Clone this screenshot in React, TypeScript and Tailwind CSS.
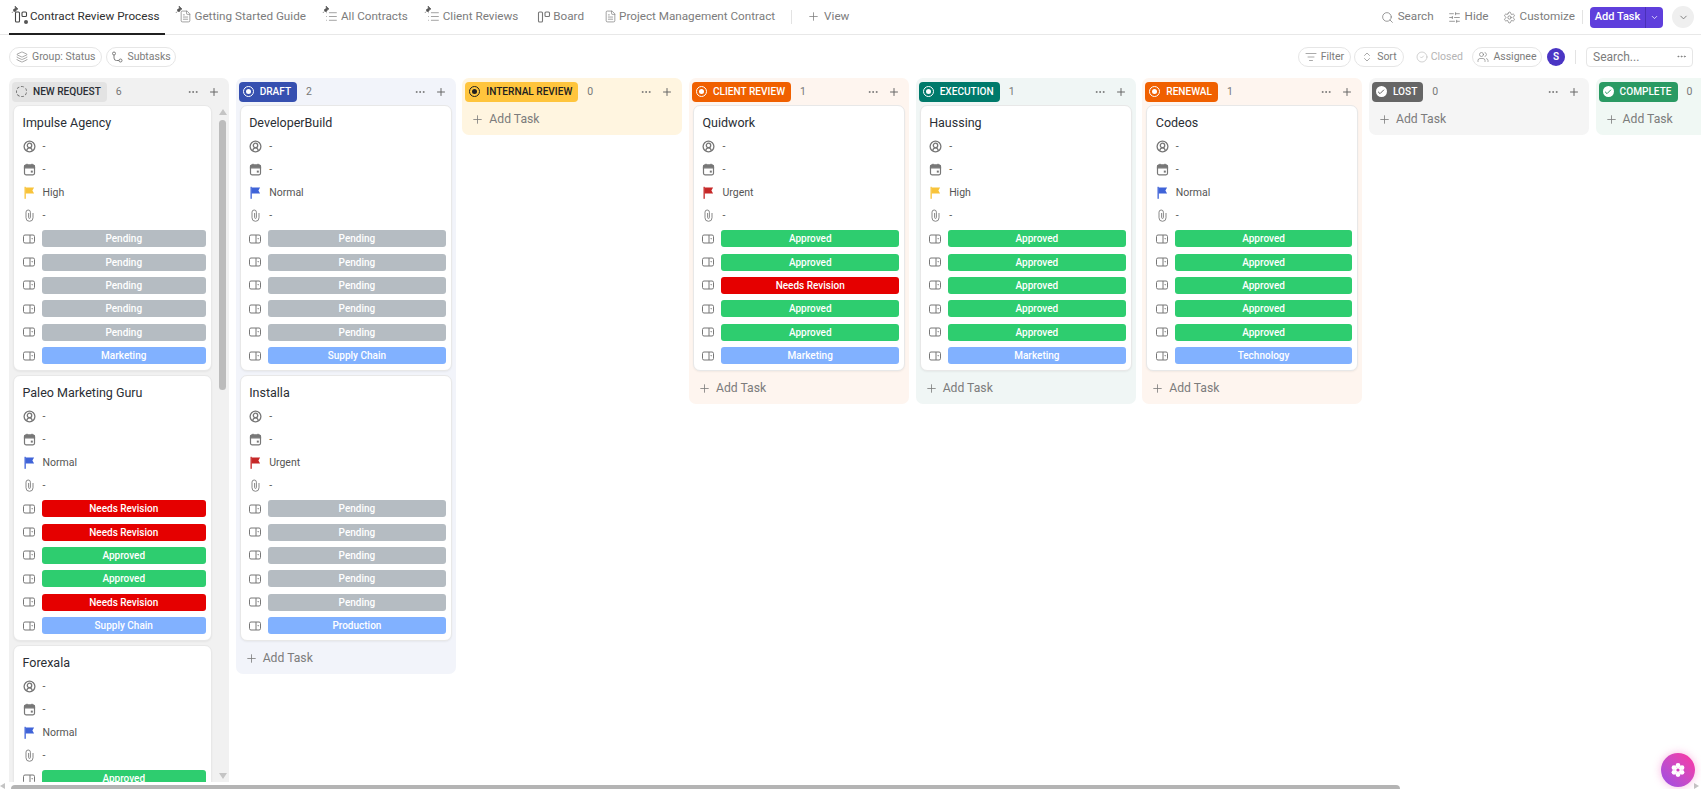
import React from 'react';
import { Search, SlidersHorizontal, Settings, ChevronDown, Plus, Ellipsis, Layers, ListFilter, ChevronsUpDown, CircleCheck, Users, FileText, List, Check } from 'lucide-react';

const font = 'font-["Roboto",sans-serif]';

const Pin = () => (
  <svg width="8" height="8" viewBox="0 0 8 8" className="absolute -left-[3px] -top-[4px] text-[#555]">
    <path d="M4 0l3 3-1.2.6L4 6 2 4l2.4-1.8z M2.6 5.2L.8 7" fill="currentColor" stroke="currentColor" strokeWidth="0.6" />
  </svg>
);

const BoardIcon = ({ className = 'text-[#777]' }: { className?: string }) => (
  <svg width="14" height="14" viewBox="0 0 14 14" fill="none" stroke="currentColor" strokeWidth="1.1" className={className}>
    <rect x="1.5" y="2" width="4" height="10" rx="1" />
    <rect x="8" y="2" width="4.5" height="4.5" rx="1" />
  </svg>
);

const Tab = ({ icon, label, pinned, active }: { icon: React.ReactNode; label: string; pinned?: boolean; active?: boolean }) => (
  <div className={`h-[35px] flex items-center gap-[2px] pl-[5px] pr-[6px] text-[11.7px] border-b-2 -mb-px ${active ? 'border-[#202020] text-[#303030]' : 'border-transparent text-[#7c7c7c]'}`}>
    <span className="relative flex w-[14px] justify-center">
      {pinned && <Pin />}
      {active && <span className="absolute right-0 bottom-0 w-[4px] h-[4px] rounded-full bg-[#555]" />}
      {icon}
    </span>
    <span>{label}</span>
  </div>
);

const Pill = ({ icon, label, px = 'px-[6px]' }: { icon: React.ReactNode; label: string; px?: string }) => (
  <div className={`h-5 flex items-center gap-1 rounded-full border border-[#e6e6e6] text-[10.5px] text-[#7c7c7c] ${px}`}>
    {icon}
    <span>{label}</span>
  </div>
);

const SubtaskIcon = () => (
  <svg width="12" height="12" viewBox="0 0 12 12" fill="none" stroke="currentColor" strokeWidth="1">
    <circle cx="3" cy="2.5" r="1.5" />
    <circle cx="9.5" cy="9.5" r="1.5" />
    <path d="M3 4v3a2.5 2.5 0 0 0 2.5 2.5H8" />
  </svg>
);

const FieldIcon = () => (
  <svg width="12" height="10" viewBox="0 0 12 10" fill="none" stroke="#777" strokeWidth="1" className="shrink-0">
    <rect x="0.5" y="1" width="11" height="8" rx="1.5" />
    <path d="M7 1v8" />
    <path d="M8.2 4.2h2l-1 1.4z" fill="#777" stroke="none" />
  </svg>
);

const PersonIcon = () => (
  <svg width="13" height="13" viewBox="0 0 13 13" fill="none" stroke="#777" strokeWidth="1.3">
    <circle cx="6.5" cy="6.5" r="5.4" />
    <circle cx="6.5" cy="5.4" r="2.2" />
    <path d="M3.6 10.8c.4-2 1.4-3 2.9-3s2.5 1 2.9 3" />
  </svg>
);

const CalIcon = () => (
  <svg width="13" height="13" viewBox="0 0 13 13" fill="none" stroke="#777" strokeWidth="1.2">
    <rect x="1.5" y="2.2" width="10" height="9.6" rx="1.5" />
    <path d="M1.5 3.5a1.3 1.3 0 0 1 1.3-1.3h7.4a1.3 1.3 0 0 1 1.3 1.3v1.3h-10z" fill="#777" />
    <path d="M4 .8v2M9 .8v2" />
    <rect x="7.8" y="7.6" width="2" height="2" fill="#777" stroke="none" />
  </svg>
);

const FlagIcon = ({ color }: { color: string }) => (
  <svg width="13" height="13" viewBox="0 0 13 13" fill={color}>
    <rect x="1.5" y="0.8" width="1.3" height="12" />
    <path d="M2.5 1.5h8.6L9.4 4.4l1.7 3.1H2.5z" />
  </svg>
);

const ClipIcon = () => (
  <svg width="13" height="13" viewBox="0 0 13 13" fill="none" stroke="#888" strokeWidth="1">
    <path d="M10 4v4.8a3.5 3.5 0 0 1-7 0V3.2a2.2 2.2 0 0 1 4.4 0v5.3a.9.9 0 0 1-1.8 0V4" />
  </svg>
);

const Row = ({ icon, text }: { icon: React.ReactNode; text: string }) => (
  <div className="h-[23px] flex items-center">
    <span className="w-5 flex shrink-0">{icon}</span>
    <span className="text-[10.5px] text-[#555]">{text}</span>
  </div>
);

const badgeColors: Record<string, string> = {
  Pending: 'bg-[#b5bcc2]',
  Approved: 'bg-[#2ecd6f]',
  'Needs Revision': 'bg-[#e50000]',
  Marketing: 'bg-[#81b1ff]',
  'Supply Chain': 'bg-[#81b1ff]',
  Production: 'bg-[#81b1ff]',
  Technology: 'bg-[#81b1ff]',
};

const priorityColors: Record<string, string> = {
  High: '#f8c33a',
  Normal: '#3f63d8',
  Urgent: '#c62828',
};

type Task = { name: string; priority: string; badges: string[] };

const Card = ({ task }: { task: Task }) => (
  <div className="shrink-0 h-[266px] rounded-[7px] bg-white border border-[#e8e8e8] shadow-[0_1px_2px_rgba(0,0,0,0.05)] pl-[8.5px] pr-[5px] pt-[6px]">
    <div className="h-[22px] flex items-center text-[12.5px] text-[#2a2e34] mb-[1px]">{task.name}</div>
    <Row icon={<PersonIcon />} text="-" />
    <Row icon={<CalIcon />} text="-" />
    <Row icon={<FlagIcon color={priorityColors[task.priority]} />} text={task.priority} />
    <Row icon={<ClipIcon />} text="-" />
    {task.badges.map((b, i) => (
      <div key={i} className="h-[23.4px] flex items-center">
        <span className="w-[19px] flex shrink-0"><FieldIcon /></span>
        <div className={`flex-1 h-[17px] rounded-[3px] flex items-center justify-center text-[10px] font-medium text-white ${badgeColors[b]}`}>{b}</div>
      </div>
    ))}
  </div>
);

const StatusIcon = ({ type, color }: { type: string; color: string }) => {
  if (type === 'none') return <span className="w-[11px] h-[11px] rounded-full border border-dashed border-[#777] shrink-0" />;
  if (type === 'check')
    return (
      <span className="w-[11px] h-[11px] rounded-full bg-white flex items-center justify-center shrink-0">
        <Check size={8} strokeWidth={3} style={{ color }} />
      </span>
    );
  return (
    <span className={`w-[11px] h-[11px] rounded-full border-[1.5px] flex items-center justify-center shrink-0 ${type === 'dark' ? 'border-[#202020]' : 'border-white'}`}>
      <span className={`w-[5px] h-[5px] rounded-full ${type === 'dark' ? 'bg-[#202020]' : 'bg-white'}`} />
    </span>
  );
};

type Col = {
  name: string;
  count: number;
  tag: string;
  text: string;
  bg: string;
  icon: string;
  color: string;
  tasks: Task[];
  fixedH?: boolean;
};

const pending5 = ['Pending', 'Pending', 'Pending', 'Pending', 'Pending'];
const approved = (last: string, mid = 'Approved') => ['Approved', 'Approved', mid, 'Approved', 'Approved', last];

const columns: Col[] = [
  {
    name: 'NEW REQUEST', count: 6, tag: 'bg-[#e3e3e3]', text: 'text-[#2a2e34]', bg: 'bg-[#f1f1f1]', icon: 'none', color: '#777',
    fixedH: true,
    tasks: [
      { name: 'Impulse Agency', priority: 'High', badges: [...pending5, 'Marketing'] },
      { name: 'Paleo Marketing Guru', priority: 'Normal', badges: ['Needs Revision', 'Needs Revision', 'Approved', 'Approved', 'Needs Revision', 'Supply Chain'] },
      { name: 'Forexala', priority: 'Normal', badges: ['Approved', 'Approved', 'Approved', 'Approved', 'Approved', 'Marketing'] },
    ],
  },
  {
    name: 'DRAFT', count: 2, tag: 'bg-[#3650b0]', text: 'text-white', bg: 'bg-[#f2f4fa]', icon: 'ring', color: '#fff',
    tasks: [
      { name: 'DeveloperBuild', priority: 'Normal', badges: [...pending5, 'Supply Chain'] },
      { name: 'Installa', priority: 'Urgent', badges: [...pending5, 'Production'] },
    ],
  },
  { name: 'INTERNAL REVIEW', count: 0, tag: 'bg-[#ffc53d]', text: 'text-[#202020]', bg: 'bg-[#fff5e0]', icon: 'dark', color: '#202020', tasks: [] },
  {
    name: 'CLIENT REVIEW', count: 1, tag: 'bg-[#f06000]', text: 'text-white', bg: 'bg-[#fef5ef]', icon: 'ring', color: '#fff',
    tasks: [{ name: 'Quidwork', priority: 'Urgent', badges: approved('Marketing', 'Needs Revision') }],
  },
  {
    name: 'EXECUTION', count: 1, tag: 'bg-[#007a6b]', text: 'text-white', bg: 'bg-[#f0f6f5]', icon: 'ring', color: '#fff',
    tasks: [{ name: 'Haussing', priority: 'High', badges: approved('Marketing') }],
  },
  {
    name: 'RENEWAL', count: 1, tag: 'bg-[#f06000]', text: 'text-white', bg: 'bg-[#fef5ef]', icon: 'ring', color: '#fff',
    tasks: [{ name: 'Codeos', priority: 'Normal', badges: approved('Technology') }],
  },
  { name: 'LOST', count: 0, tag: 'bg-[#666666]', text: 'text-white', bg: 'bg-[#f5f5f5]', icon: 'check', color: '#666666', tasks: [] },
  { name: 'COMPLETE', count: 0, tag: 'bg-[#2a9a63]', text: 'text-white', bg: 'bg-[#f0f8f4]', icon: 'check', color: '#2a9a63', tasks: [] },
];

const Column = ({ col }: { col: Col }) => (
  <div className={`w-[220px] shrink-0 rounded-[7px] ${col.bg} ${col.fixedH ? 'h-[704px] rounded-b-none overflow-hidden' : 'self-start'}`}>
    <div className="h-[27px] flex items-center pl-[3px] pr-[9px]">
      <div className={`h-5 flex items-center gap-[6px] pl-1 pr-[6px] rounded-[4px] ${col.tag}`}>
        <StatusIcon type={col.icon} color={col.color} />
        <span className={`text-[10.1px] font-medium ${col.text}`}>{col.name}</span>
      </div>
      <span className="ml-[9px] text-[10.5px] text-[#777]">{col.count}</span>
      <Ellipsis size={12} className="ml-auto text-[#777]" />
      <Plus size={12} className="ml-[9px] text-[#666]" />
    </div>
    {col.fixedH ? (
      <div className="flex pl-1 pr-[3px] gap-[7px]">
        <div className="w-[199px] flex flex-col gap-[4px]">
          {col.tasks.map((t) => <Card key={t.name} task={t} />)}
        </div>
        <div className="w-[7px] flex flex-col items-center pt-1">
          <span className="w-0 h-0 border-x-4 border-x-transparent border-b-[6px] border-b-[#c4c4c4]" />
          <span className="w-[7px] h-[270px] mt-[5px] rounded-full bg-[#bcbcbc]" />
          <span className="w-0 h-0 mt-[383px] border-x-4 border-x-transparent border-t-[6px] border-t-[#c4c4c4]" />
        </div>
      </div>
    ) : (
      <div className={`px-1 flex flex-col gap-[4px] ${col.tasks.length ? 'mb-[3px]' : ''}`}>
        {col.tasks.map((t) => <Card key={t.name} task={t} />)}
      </div>
    )}
    {!col.fixedH && (
      <div className="h-[27px] mb-[3px] pt-[2px] flex items-center gap-[5px] pl-[9px] text-[12.2px] text-[#7c7c7c]">
        <Plus size={13} strokeWidth={1.5} />
        <span>Add Task</span>
      </div>
    )}
  </div>
);

export default function App() {
  return (
    <div className={`relative h-screen w-full overflow-hidden bg-white flex flex-col ${font}`}>
      <div className="h-[35px] shrink-0 flex items-center gap-2 border-b border-[#e8e8e8] pl-[9px] pr-[7px]">
        <Tab active pinned icon={<BoardIcon className="text-[#444]" />} label="Contract Review Process" />
        <Tab pinned icon={<FileText size={13} strokeWidth={1.3} />} label="Getting Started Guide" />
        <Tab pinned icon={<List size={13} strokeWidth={1.3} />} label="All Contracts" />
        <Tab pinned icon={<List size={13} strokeWidth={1.3} />} label="Client Reviews" />
        <Tab icon={<BoardIcon />} label="Board" />
        <Tab icon={<FileText size={13} strokeWidth={1.3} />} label="Project Management Contract" />
        <div className="ml-[2px] w-px h-[14px] bg-[#e3e3e3]" />
        <div className="ml-[7px] flex items-center gap-[4px] text-[11.7px] text-[#7c7c7c]">
          <Plus size={13} strokeWidth={1.4} />
          <span>View</span>
        </div>

        <div className="ml-auto flex items-center text-[11.7px] text-[#7c7c7c]">
          <Search size={13} strokeWidth={1.4} className="mr-[4px]" />
          <span>Search</span>
          <SlidersHorizontal size={13} strokeWidth={1.4} className="ml-[14px] mr-[4px]" />
          <span>Hide</span>
          <Settings size={13} strokeWidth={1.4} className="ml-[14px] mr-[4px]" />
          <span>Customize</span>
          <div className="w-px h-[14px] bg-[#e3e3e3] mx-[7px]" />
          <div className="h-[21px] w-[73px] flex items-center rounded-[4px] bg-[#5f3fdc] text-white text-[11px] font-medium">
            <span className="flex-1 text-center">Add Task</span>
            <span className="h-full w-[18px] flex items-center justify-center border-l border-[#4a30b8]">
              <ChevronDown size={9} />
            </span>
          </div>
          <span className="ml-[9px] w-[22px] h-[22px] rounded-full bg-[#efefef] flex items-center justify-center">
            <ChevronDown size={11} className="text-[#777]" />
          </span>
        </div>
      </div>

      <div className="h-[43px] shrink-0 flex items-center pl-[9px] pr-[8px]">
        <Pill icon={<Layers size={12} strokeWidth={1.3} />} label="Group: Status" />
        <div className="w-1" />
        <Pill px="px-[4px]" icon={<SubtaskIcon />} label="Subtasks" />
        <div className="ml-auto flex items-center">
          <Pill icon={<ListFilter size={12} strokeWidth={1.3} />} label="Filter" />
          <div className="w-[3px]" />
          <Pill icon={<ChevronsUpDown size={12} strokeWidth={1.3} />} label="Sort" />
          <div className="flex items-center gap-[3px] pl-3 pr-[9px] text-[10.5px] text-[#b4b4b4]">
            <CircleCheck size={12} strokeWidth={1.2} />
            <span>Closed</span>
          </div>
          <Pill px="px-[4.5px]" icon={<Users size={12} strokeWidth={1.3} />} label="Assignee" />
          <span className="ml-[5px] w-[18px] h-[18px] rounded-full bg-[#4a35c4] text-white text-[10px] font-semibold flex items-center justify-center">S</span>
          <div className="w-px h-[14px] bg-[#e3e3e3] ml-[10px] mr-[10px]" />
          <div className="w-[107px] h-5 flex items-center justify-between rounded-[4px] border border-[#e6e6e6] pl-[6px] pr-[5px] text-[12px] text-[#7c7c7c]">
            <span>Search...</span>
            <Ellipsis size={11} />
          </div>
        </div>
      </div>

      <div className="flex-1 flex gap-[6.67px] pl-[9px] overflow-hidden">
        {columns.map((c) => <Column key={c.name} col={c} />)}
      </div>

      <div className="h-[7px] shrink-0 flex items-end">
        <span className="w-0 h-0 border-y-[3px] border-y-transparent border-r-[5px] border-r-[#c4c4c4]" />
        <div className="ml-[6px] w-[1389px] h-1 rounded-t-full bg-[#b4b4b4]" />
        <span className="ml-auto mr-[2px] w-0 h-0 border-y-[3px] border-y-transparent border-l-[5px] border-l-[#c4c4c4]" />
      </div>

      <div className="absolute right-[6px] bottom-[2px] w-[34px] h-[34px] rounded-full bg-gradient-to-tr from-[#9a4be6] to-[#ff2fa0] shadow-[0_0_8px_rgba(240,80,180,0.4)] flex items-center justify-center">
        <svg width="16" height="16" viewBox="0 0 16 16" fill="#fff">
          <circle cx="8" cy="3.4" r="2.4" />
          <circle cx="8" cy="12.6" r="2.4" />
          <circle cx="4" cy="5.7" r="2.4" />
          <circle cx="12" cy="5.7" r="2.4" />
          <circle cx="4" cy="10.3" r="2.4" />
          <circle cx="12" cy="10.3" r="2.4" />
          <circle cx="8" cy="8" r="3" />
          <circle cx="8" cy="8" r="1.6" fill="#d63cc0" />
        </svg>
      </div>
    </div>
  );
}
